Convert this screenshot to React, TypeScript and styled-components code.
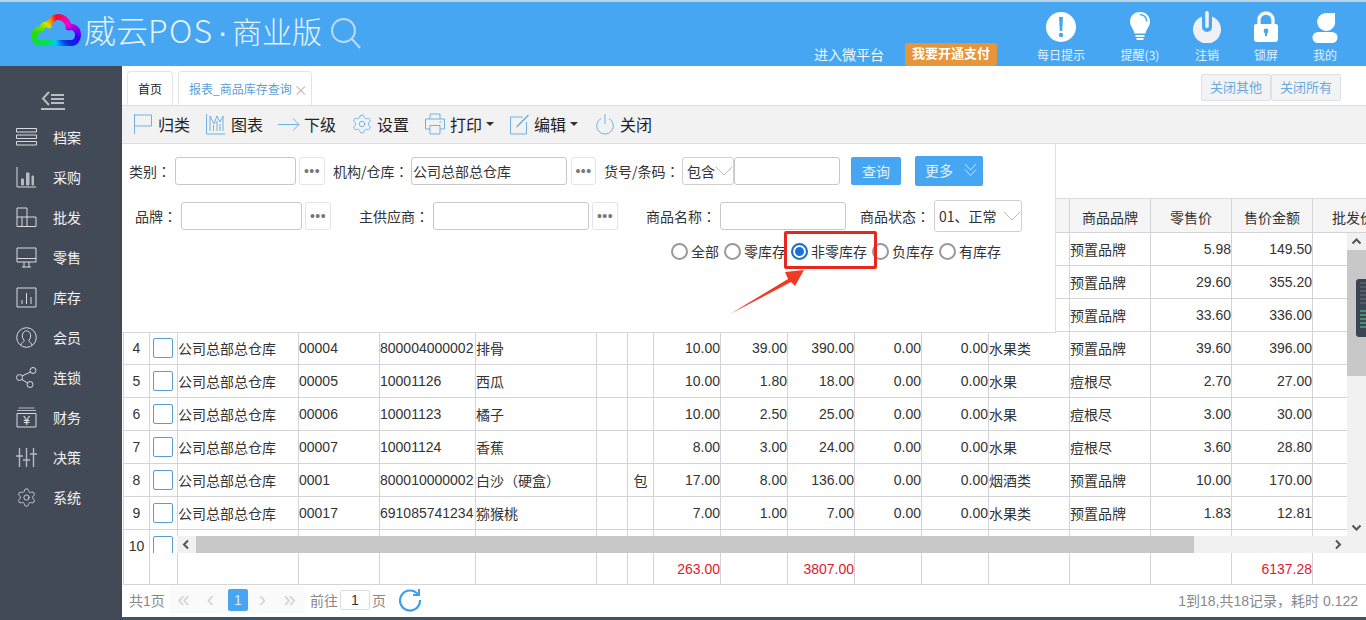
import React from "react";
import styled, { createGlobalStyle } from "styled-components";
import { Settings } from "lucide-react";

const Global = createGlobalStyle`
  html, body { margin: 0; padding: 0; background: #fff; }
  body { font-family: "Liberation Sans", "Noto Sans CJK SC", sans-serif; font-size: 14px; color: #333; }
  * { box-sizing: border-box; }
`;

const Page = styled.div`position: relative; width: 1366px; height: 620px; overflow: hidden; border-top: 2px solid #b9d3e6; background: #fff;`;
const Header = styled.header`display: flex; height: 64px; background: #46a6f2; padding-left: 31px;`;
const Logo = styled.svg`width: 50px; height: 34px; margin-top: 12px; flex: none;`;
const Conic = styled.div`width: 50px; height: 34px; background: conic-gradient(from 0deg at 25px 19px, #ff0030 0deg, #ff00d0 50deg, #3000ff 100deg, #0030e0 130deg, #00c8ff 180deg, #00e060 225deg, #20e000 270deg, #d8e000 315deg, #ff8000 340deg, #ff0030 360deg);`;
const Title = styled.div`margin: 3px 0 0 3px; font: 300 32px/48px "Noto Sans CJK SC", sans-serif; color: #e6f3fd; white-space: nowrap; height: 50px;`;
const TitleLatin = styled.span`letter-spacing: 1.3px;`;
const TitleDot = styled.span`font-family: "Liberation Sans", sans-serif; margin: 0 4px;`;
const TitleTail = styled.span`font-size: 30px;`;
const SearchIcon = styled.svg`width: 31px; height: 32px; margin: 15px 0 0 8px; flex: none;`;
const HeaderRight = styled.div`display: flex; align-items: flex-end; margin-left: auto; padding-right: 29px;`;
const PlatformLink = styled.span`font-size: 14px; line-height: 20px; color: #f2f8fe; margin-bottom: 2px; font-family: "Noto Sans CJK SC", sans-serif;`;
const PayButton = styled.span`margin: 0 42px 1px 21px; width: 92px; height: 22px; background: #e6953a; border-radius: 3px; color: #fff; font: 700 13px/20px "Noto Sans CJK SC", sans-serif; text-align: center; box-shadow: 0 1px 0 #b9a488;`;
const ToolSet = styled.div`display: flex; gap: 35px; height: 100%; margin-left: -2px;`;
const Tool = styled.div<{ $w: number }>`display: flex; flex-direction: column; align-items: center; width: ${p => p.$w}px; padding-top: 9px;`;
const ToolIcon = styled.svg`width: 32px; height: 32px; flex: none;`;
const ToolLabel = styled.span`font: 12px/16px "Noto Sans CJK SC", sans-serif; color: #e3f1fc; margin-top: 4px; white-space: nowrap;`;

const Body = styled.div`display: flex; height: 554px;`;
const Sidebar = styled.nav`width: 122px; flex: none; background: #434a57; padding-top: 24px;`;
const Toggle = styled.svg`display: block; width: 24px; height: 20px; margin: 0 0 7px 41px;`;
const NavItem = styled.div`display: flex; align-items: center; height: 40px; padding-left: 16px; color: #f2f3f5; font: 14px "Noto Sans CJK SC", sans-serif;`;
const NavIcon = styled.svg`width: 21px; height: 21px; margin-right: 16px; flex: none; fill: none; stroke: #d8dce2; stroke-width: 1;`;
const GearBox = styled.span`display: flex; width: 21px; margin-right: 16px; color: #d8dce2;`;

const Main = styled.main`flex: 1; min-width: 0; display: flex; flex-direction: column; border-bottom: 3px solid #3d5366;`;
const TabBar = styled.div`display: flex; align-items: flex-end; height: 39px; padding: 0 25px 0 5px; flex: none;`;
const Tab = styled.div<{ $active?: boolean; $w: number }>`
  display: flex; align-items: center; justify-content: ${p => (p.$active ? "flex-start" : "center")}; gap: 2px;
  width: ${p => p.$w}px; height: 34px; margin-right: 5px; padding-left: ${p => (p.$active ? 10 : 0)}px; border: 1px solid #e6e3e0; border-bottom: 0; border-radius: 4px 4px 0 0;
  font: 12px "Noto Sans CJK SC", sans-serif; color: ${p => (p.$active ? "#5b9fd6" : "#222")};
`;
const TabClose = styled.span`color: #bbb; font-size: 14px;`;
const TabActions = styled.div`display: flex; margin-left: auto; align-self: flex-start; margin-top: 8px;`;
const TabAction = styled.div`width: 70px; height: 27px; background: #f2f3f4; border: 1px solid #dfe0e2; border-radius: 2px; color: #6aa9dc; font: 13px/24px "Noto Sans CJK SC", sans-serif; text-align: center;`;

const Toolbar = styled.div`display: flex; align-items: center; gap: 16px; height: 39px; padding: 0 0 2px 12px; background: #f2f2f2; border-top: 1px solid #dedede; border-bottom: 1px solid #dedede; flex: none;`;
const ToolbarItem = styled.div<{ $gap: number; $ml?: number }>`display: flex; align-items: center; gap: ${p => p.$gap}px; margin-left: ${p => p.$ml ?? 0}px; font: 16px "Noto Sans CJK SC", sans-serif; color: #222;`;
const ToolbarIcon = styled.svg<{ $w: number }>`width: ${p => p.$w}px; height: 22px; flex: none; fill: none; stroke: #6fb1e2; stroke-width: 1;`;
const Caret = styled.i`width: 0; height: 0; margin-left: -1px; border: 4px solid transparent; border-top-color: #333; border-bottom: 0;`;

const Work = styled.div`position: relative; flex: 1; padding-top: 54px;`;
const Panel = styled.section`position: absolute; z-index: 2; top: 0; left: 0; width: 934px; height: 189px; padding-top: 13px; background: #fff; border-right: 1px solid #e0e0e0; border-bottom: 1px solid #d8d8d8;`;
const FilterRow = styled.div<{ $pad: number }>`display: flex; align-items: center; height: 28px; padding-left: ${p => p.$pad}px; & + & { margin-top: 17px; }`;
const Label = styled.label<{ $w: number; $ml?: number }>`flex: none; width: ${p => p.$w}px; margin-left: ${p => p.$ml ?? 0}px; font: 14px "Noto Sans CJK SC", sans-serif; color: #333; white-space: nowrap;`;
const Colon = styled.span`font-family: "Noto Sans CJK TC", sans-serif;`;
const TextInput = styled.input<{ $w: number }>`flex: none; width: ${p => p.$w}px; height: 28px; padding: 0 1px; border: 1px solid #c8c8c8; border-radius: 3px; outline: 0; background: #fff; font: 14px "Noto Sans CJK SC", sans-serif; color: #333;`;
const Dots = styled.button<{ $w: number; $ml: number }>`flex: none; width: ${p => p.$w}px; height: 28px; margin-left: ${p => p.$ml}px; padding: 0; border: 1px solid #e4e4e4; border-radius: 3px; background: #fff; color: #777; font: 14px/26px "Liberation Sans", sans-serif; letter-spacing: 0.4px;`;
const SelectBox = styled.div<{ $w: number; $h: number }>`flex: none; display: flex; align-items: center; justify-content: space-between; width: ${p => p.$w}px; height: ${p => p.$h}px; padding: 0 0 0 4px; border: 1px solid #d0d0d0; border-radius: 3px; font: 14px "Noto Sans CJK SC", sans-serif; color: #333; white-space: nowrap;`;
const Chevron = styled.svg`width: 18px; height: 10px; flex: none; fill: none; stroke: #bbb;`;
const QueryButton = styled.button`flex: none; width: 50px; height: 28px; margin-left: 11px; border: 0; border-radius: 2px; padding: 0; background: #46a6f2; color: #e4f2fd; font: 14px "Noto Sans CJK SC", sans-serif;`;
const MoreButton = styled.button`flex: none; display: flex; align-items: center; justify-content: space-between; width: 68px; height: 30px; margin-left: 14px; border: 0; border-radius: 2px; padding: 0 6px 2px 10px; background: #46a6f2; color: #e4f2fd; font: 14px "Noto Sans CJK SC", sans-serif;`;
const MoreChevrons = styled.svg`width: 13px; height: 14px; fill: none; stroke: #cfe6fa;`;
const RadioRow = styled.div`display: flex; gap: 5px; align-items: center; height: 17px; margin-top: 13px; padding-left: 549px;`;
const RadioItem = styled.label`display: flex; align-items: center; gap: 3px; font: 14px/17px "Noto Sans CJK SC", sans-serif; color: #333; white-space: nowrap;`;
const RadioDot = styled.span<{ $on?: boolean }>`
  flex: none; width: 17px; height: 17px; border-radius: 50%; background: #fff;
  border: 2px solid ${p => (p.$on ? "#1a6fd8" : "#9a9a9a")};
  box-shadow: ${p => (p.$on ? "inset 0 0 0 2px #fff, inset 0 0 0 7px #1a6fd8" : "none")};
`;
const Highlight = styled.div`position: absolute; left: 662px; top: 87px; width: 93px; height: 38px; border: 3px solid #e8261f; border-radius: 2px;`;
const ArrowMark = styled.svg`position: absolute; left: 600px; top: 120px; width: 90px; height: 60px; fill: #f03a24;`;

const ScrollArea = styled.div`position: relative; height: 355px; margin-left: 1px; border-left: 1px solid #d4d4d8; overflow: hidden;`;
const DataTable = styled.table`table-layout: fixed; width: 1270px; border-collapse: separate; border-spacing: 0; font-size: 14px;`;
const HeadCell = styled.th`height: 35px; padding: 2px 0 0; background: #f5f5f5; border-top: 1px solid #dcdcdc; border-bottom: 1px solid #d4d4d8; border-right: 1px solid #d4d4d8; font: 400 14px "Noto Sans CJK SC", sans-serif; color: #333; text-align: center; white-space: nowrap; overflow: hidden;`;
const Cell = styled.td<{ $align?: string; $red?: boolean }>`
  height: 33px; padding: 0; border-bottom: 1px solid #d4d4d8; border-right: 1px solid #d4d4d8;
  text-align: ${p => p.$align ?? "left"}; color: ${p => (p.$red ? "#e0182d" : "#333")}; white-space: nowrap; font-family: "Liberation Sans", "Noto Sans CJK SC", sans-serif;
`;
const CheckMark = styled.span`display: block; width: 20px; height: 20px; margin-left: 3px; border: 1px solid #5b9bd5; border-radius: 2px; background: #fff;`;
const SumWrap = styled.div`height: 32px; margin-left: 1px; border-left: 1px solid #d4d4d8; overflow: hidden;`;
const SumCell = styled(Cell)`height: 32px;`;

const VScroll = styled.div`position: absolute; top: 35px; right: 0; width: 19px; height: 320px; padding-bottom: 17px; background: #f1f1f1; display: flex; flex-direction: column; align-items: center;`;
const ScrollArrow = styled.svg`width: 19px; height: 17px; flex: none; fill: none; stroke: #555; stroke-width: 2;`;
const VThumb = styled.div`width: 19px; height: 126px; background: #c8c8c8; flex: none;`;
const VGap = styled.div`flex: 1;`;
const HScroll = styled.div`position: absolute; left: 53px; right: 19px; bottom: 0; height: 17px; background: #f1f1f1; display: flex; align-items: center;`;
const HThumb = styled.div`width: 998px; height: 17px; background: #c8c8c8; flex: none;`;

const Pager = styled.div`display: flex; align-items: center; height: 32px; flex: none; padding: 0 8px 2px 6px; color: #888; font: 14px "Noto Sans CJK SC", sans-serif; border-left: 1px solid transparent;`;
const PagerTotal = styled.span`font-family: "Liberation Sans", "Noto Sans CJK SC", sans-serif; font-size: 14px; width: 41px;`;
const PageStrip = styled.div`display: flex; align-items: center; width: 135px; height: 26px; background: #fafafa; color: #d4d4d4; font: 22px/24px "Liberation Sans", sans-serif;`;
const PageArrow = styled.span`width: 27px; text-align: center;`;
const PageCurrent = styled.span`width: 20px; height: 22px; margin: 0 1px 0 4px; background: #46a6f2; color: #d9eeff; border-radius: 2px; font: 14px/22px "Liberation Sans", sans-serif; text-align: center;`;
const PageGoto = styled.span`margin-left: 5px;`;
const PageInput = styled.input`width: 30px; height: 20px; margin: 0 2px; padding: 0; border: 1px solid #ddd; border-radius: 2px; text-align: center; font: 14px "Liberation Sans", sans-serif; color: #333; outline: 0;`;
const Refresh = styled.svg`width: 24px; height: 24px; margin-left: 12px; fill: none; stroke: #3d9fe8; stroke-width: 2.2;`;
const PagerInfo = styled.span`margin-left: auto; color: #888; font-family: "Liberation Sans", "Noto Sans CJK SC", sans-serif;`;

const Widget = styled.svg`position: absolute; z-index: 3; top: 277px; right: 0; width: 10px; height: 58px;`;

const widths = [26, 28, 121, 81, 96, 121, 31, 26, 67, 67, 67, 67, 67, 81, 81, 81, 81, 81];
const Cols = () => <colgroup>{widths.map((w, i) => <col key={i} style={{ width: w }} />)}</colgroup>;

const aligns: Record<number, string> = { 0: "center", 7: "center", 8: "right", 9: "right", 10: "right", 11: "right", 12: "right", 15: "right", 16: "right" };
const WH = "公司总部总仓库";
const rows: string[][] = [
  ["1", "", "", "", "", "", "", "", "", "", "", "", "", "", "预置品牌", "5.98", "149.50", ""],
  ["2", "", "", "", "", "", "", "", "", "", "", "", "", "", "预置品牌", "29.60", "355.20", ""],
  ["3", "", "", "", "", "", "", "", "", "", "", "", "", "", "预置品牌", "33.60", "336.00", ""],
  ["4", "", WH, "00004", "800004000002", "排骨", "", "", "10.00", "39.00", "390.00", "0.00", "0.00", "水果类", "预置品牌", "39.60", "396.00", ""],
  ["5", "", WH, "00005", "10001126", "西瓜", "", "", "10.00", "1.80", "18.00", "0.00", "0.00", "水果", "痘根尽", "2.70", "27.00", ""],
  ["6", "", WH, "00006", "10001123", "橘子", "", "", "10.00", "2.50", "25.00", "0.00", "0.00", "水果", "痘根尽", "3.00", "30.00", ""],
  ["7", "", WH, "00007", "10001124", "香蕉", "", "", "8.00", "3.00", "24.00", "0.00", "0.00", "水果", "痘根尽", "3.60", "28.80", ""],
  ["8", "", WH, "0001", "800010000002", "白沙（硬盒）", "", "包", "17.00", "8.00", "136.00", "0.00", "0.00", "烟酒类", "预置品牌", "10.00", "170.00", ""],
  ["9", "", WH, "00017", "691085741234", "猕猴桃", "", "", "7.00", "1.00", "7.00", "0.00", "0.00", "水果类", "预置品牌", "1.83", "12.81", ""],
  ["10", "", "", "", "", "", "", "", "", "", "", "", "", "", "", "", "", ""],
];
const sums: Record<number, string> = { 8: "263.00", 10: "3807.00", 16: "6137.28" };
const heads = ["", "", "", "", "", "", "", "", "", "", "", "", "", "", "商品品牌", "零售价", "售价金额", "批发价"];

const navIcons: React.ReactNode[] = [
  <path key="a" d="M.5 1.500h20V5H.5zM.5 8h20v3.500H.5zM.5 14.500h20V18H.5z" />,
  <g key="b"><path d="M1 0v20h19" /><path d="M5.500 12h2v6h-2zM10.500 6H13v12h-2.500zM16 9h1.500v9H16z" stroke="#b6bbc3" fill="#b6bbc3" /></g>,
  <path key="c" d="M1 1h10v9h9v9.500H1zM1 10h10v9.500M6 10v9.500" />,
  <path key="d" d="M1 1h19v14H1zM1 11.500h19M6 20h9M8 15v5M13 15v5" />,
  <path key="e" d="M1 1h19v19H1zM6 13v4M10.500 6v11M15 10v7" />,
  <g key="f"><circle cx="10.500" cy="10.500" r="9.800" /><path d="M5 18c.5-3 3-2.500 3.300-4.500C6.500 11.500 6 9.500 6.500 7.500 7 5 9 3.800 10.500 3.800S14 5 14.500 7.500c.5 2 0 4-1.800 6C13 15.500 15.500 15 16 18" /></g>,
  <g key="g"><circle cx="17" cy="3.500" r="3" /><circle cx="3.500" cy="10.500" r="3" /><circle cx="14" cy="17.500" r="3" /><path d="M14.500 5L6 9M6 12.500l5.500 3.500" /></g>,
  <g key="h"><path d="M2.500 1h16M1 3.500h19" stroke="#b6bbc3" /><path d="M1 6.500h19V20H1z" /><text x="10.500" y="17.500" fontSize="12" textAnchor="middle" fill="#e0e3e8" stroke="none" fontFamily="Liberation Sans">¥</text></g>,
  <path key="i" d="M3.500 1v19M10.500 1v19M17.500 1v19M0 9h7M7 13h7M14 7h7" strokeWidth="1.400" stroke="#b6bbc3" />,
];
const navLabels = ["档案", "采购", "批发", "零售", "库存", "会员", "连锁", "财务", "决策"];
const panelLabel = (t: string) => <>{t}<Colon>：</Colon></>;

export default function App() {
  return (
    <Page>
      <Global />
      <Header>
        <Logo viewBox="0 0 50 34">
          <defs>
            <mask id="cloud-mask">
              <path d="M10 29C5 29 3 25 3 22c0-4 3.500-7 7.500-6.500C11 11 15 9.500 18 11.500 19 6 23.500 3 27 3c6 0 10.500 5 10.500 10.500C42 11.500 47 15 47 21c0 4.500-3 8-7 8z" fill="none" stroke="#fff" strokeWidth="6" strokeLinejoin="round" />
            </mask>
          </defs>
          <foreignObject x="0" y="0" width="50" height="34" mask="url(#cloud-mask)"><Conic /></foreignObject>
        </Logo>
        <Title>威云<TitleLatin>POS</TitleLatin><TitleDot>·</TitleDot><TitleTail>商业版</TitleTail></Title>
        <SearchIcon viewBox="0 0 31 32" fill="none" stroke="#d5eafb" strokeWidth="2" opacity="0.8">
          <circle cx="13.500" cy="13.500" r="11.500" /><path d="M22 22l8 9" />
        </SearchIcon>
        <HeaderRight>
          <PlatformLink>进入微平台</PlatformLink>
          <PayButton>我要开通支付</PayButton>
          <ToolSet>
            <Tool $w={48}>
              <ToolIcon viewBox="0 0 32 32"><circle cx="16" cy="16" r="15" fill="#fff" /><path d="M14 6h4l-.8 14h-2.400z" fill="#46a6f2" /><circle cx="16" cy="24" r="2.200" fill="#46a6f2" /></ToolIcon>
              <ToolLabel>每日提示</ToolLabel>
            </Tool>
            <Tool $w={40}>
              <ToolIcon viewBox="0 0 32 32"><path d="M16 1C9.500 1 6 6 6 10.500c0 5 3.500 7 4.500 12h11c1-5 4.500-7 4.500-12C26 6 22.500 1 16 1z" fill="#fff" /><path d="M16 3.500c4 .3 6.500 3 6.800 7" stroke="#46a6f2" strokeWidth="1.500" fill="none" /><path d="M11.500 25h9M12.500 28h7" stroke="#fff" strokeWidth="2" /></ToolIcon>
              <ToolLabel>提醒(3)</ToolLabel>
            </Tool>
            <Tool $w={24}>
              <ToolIcon viewBox="0 0 32 32"><path d="M11 5.500a14 14 0 1 0 10 0V16a5 5 0 0 1-10 0z" fill="#f1f1f5" /><rect x="14.200" y="0" width="3.600" height="17" rx="1.800" fill="#f1f1f5" /></ToolIcon>
              <ToolLabel>注销</ToolLabel>
            </Tool>
            <Tool $w={24}>
              <ToolIcon viewBox="0 0 32 32"><path d="M9 14V9a7 7 0 0 1 14 0v5" fill="none" stroke="#f6f6f6" strokeWidth="3.400" /><path d="M4 15a2 2 0 0 1 2-2h20a2 2 0 0 1 2 2v13a3 3 0 0 1-3 3H7a3 3 0 0 1-3-3z" fill="#fff" /><circle cx="16" cy="20" r="2.400" fill="#46a6f2" /><path d="M15 21h2v4h-2z" fill="#46a6f2" /></ToolIcon>
              <ToolLabel>锁屏</ToolLabel>
            </Tool>
            <Tool $w={24}>
              <ToolIcon viewBox="0 0 32 32"><path d="M16 2h10v7a9 9 0 1 1-10-7z" fill="#fff" /><rect x="3.500" y="21" width="25" height="11" rx="5.500" fill="#fff" /></ToolIcon>
              <ToolLabel>我的</ToolLabel>
            </Tool>
          </ToolSet>
        </HeaderRight>
      </Header>
      <Body>
        <Sidebar>
          <Toggle viewBox="0 0 24 20" fill="none" stroke="#b8bcc4" strokeWidth="2">
            <path d="M8 2L2 8.500 8 15M10 5h13M10 9h13M10 13h13" /><path d="M0 19h24" />
          </Toggle>
          {navLabels.map((t, i) => (
            <NavItem key={t}><NavIcon viewBox="0 0 21 21">{navIcons[i]}</NavIcon>{t}</NavItem>
          ))}
          <NavItem><GearBox><Settings size={21} strokeWidth={1} /></GearBox>系统</NavItem>
        </Sidebar>
        <Main>
          <TabBar>
            <Tab $w={46}>首页</Tab>
            <Tab $w={134} $active>报表_商品库存查询<TabClose>×</TabClose></Tab>
            <TabActions>
              <TabAction>关闭其他</TabAction>
              <TabAction>关闭所有</TabAction>
            </TabActions>
          </TabBar>
          <Toolbar>
            <ToolbarItem $gap={6}>
              <ToolbarIcon $w={18} viewBox="0 0 18 22"><path d="M.5 1v20M.5 2h17v11H.5" /></ToolbarIcon>归类
            </ToolbarItem>
            <ToolbarItem $gap={5}>
              <ToolbarIcon $w={20} viewBox="0 0 20 22"><path d="M.5 1v20h19M4 18V3l4 8 3-8 3 6 3-6v15M7.500 18v-6M11 18V8M14 18v-7" /></ToolbarIcon>图表
            </ToolbarItem>
            <ToolbarItem $gap={4} $ml={-1}>
              <ToolbarIcon $w={22} viewBox="0 0 22 22"><path d="M0 11.500h21M15 5.500l6 6-6 6" /></ToolbarIcon>下级
            </ToolbarItem>
            <ToolbarItem $gap={4} $ml={-1}>
              <ToolbarIcon as={Settings} $w={22} size={22} strokeWidth={1} color="#6fb1e2" />设置
            </ToolbarItem>
            <ToolbarItem $gap={5}>
              <ToolbarIcon $w={20} viewBox="0 0 20 22"><path d="M5 6V1h10v5M5 16H.5V6h19v10H15M5 12.500h10V21H5zM14.500 9h2" /></ToolbarIcon>打印<Caret />
            </ToolbarItem>
            <ToolbarItem $gap={5}>
              <ToolbarIcon $w={19} viewBox="0 0 19 22"><path d="M13 4H.5v17h16V9M7 14l11-11" /><path d="M6 15.500l1-3 11-11 1 1-11 11z" fill="#6fb1e2" stroke="none" /></ToolbarIcon>编辑<Caret />
            </ToolbarItem>
            <ToolbarItem $gap={6} $ml={2}>
              <ToolbarIcon $w={18} viewBox="0 0 18 22"><path d="M5 5.500a8.300 8.300 0 1 0 8 0M9 1v10" /></ToolbarIcon>关闭
            </ToolbarItem>
          </Toolbar>
          <Work>
            <Panel>
              <FilterRow $pad={7}>
                <Label $w={46}>{panelLabel("类别")}</Label>
                <TextInput $w={121} />
                <Dots $w={26} $ml={3}>•••</Dots>
                <Label $w={78} $ml={8}>{panelLabel("机构/仓库")}</Label>
                <TextInput $w={156} defaultValue="公司总部总仓库" />
                <Dots $w={25} $ml={4}>•••</Dots>
                <Label $w={78} $ml={8}>{panelLabel("货号/条码")}</Label>
                <SelectBox $w={52} $h={28}>包含<Chevron viewBox="0 0 18 10"><path d="M1 1l8 8 8-8" /></Chevron></SelectBox>
                <TextInput $w={106} />
                <QueryButton>查询</QueryButton>
                <MoreButton>更多<MoreChevrons viewBox="0 0 13 14"><path d="M1 1l5.500 6L12 1M1 6.500l5.500 6 5.500-6" /></MoreChevrons></MoreButton>
              </FilterRow>
              <FilterRow $pad={13}>
                <Label $w={46}>{panelLabel("品牌")}</Label>
                <TextInput $w={121} />
                <Dots $w={26} $ml={3}>•••</Dots>
                <Label $w={74} $ml={28}>{panelLabel("主供应商")}</Label>
                <TextInput $w={156} />
                <Dots $w={26} $ml={3}>•••</Dots>
                <Label $w={74} $ml={28}>{panelLabel("商品名称")}</Label>
                <TextInput $w={126} />
                <Label $w={74} $ml={14}>{panelLabel("商品状态")}</Label>
                <SelectBox $w={88} $h={32}>01、正常<Chevron viewBox="0 0 18 10"><path d="M1 1l8 8 8-8" /></Chevron></SelectBox>
              </FilterRow>
              <RadioRow>
                <RadioItem><RadioDot />全部</RadioItem>
                <RadioItem><RadioDot />零库存</RadioItem>
                <RadioItem><RadioDot $on />非零库存</RadioItem>
                <RadioItem><RadioDot />负库存</RadioItem>
                <RadioItem><RadioDot />有库存</RadioItem>
              </RadioRow>
              <Highlight />
              <ArrowMark viewBox="0 0 90 60">
                <path d="M8 50L66 15l-3-7 19-2-9 16-4-4z" />
              </ArrowMark>
            </Panel>
            <ScrollArea>
              <DataTable>
                <Cols />
                <thead><tr>{heads.map((h, i) => <HeadCell key={i}>{h}</HeadCell>)}</tr></thead>
                <tbody>
                  {rows.map(r => (
                    <tr key={r[0]}>
                      {r.map((v, i) => (
                        <Cell key={i} $align={aligns[i]}>{i === 1 ? <CheckMark /> : v}</Cell>
                      ))}
                    </tr>
                  ))}
                </tbody>
              </DataTable>
              <VScroll>
                <ScrollArrow viewBox="0 0 19 17"><path d="M5.500 10.500l4-4 4 4" /></ScrollArrow>
                <VThumb />
                <VGap />
                <ScrollArrow viewBox="0 0 19 17"><path d="M5.500 6.500l4 4 4-4" /></ScrollArrow>
              </VScroll>
              <HScroll>
                <ScrollArrow viewBox="0 0 19 17"><path d="M11 4.500l-4 4 4 4" /></ScrollArrow>
                <HThumb />
                <VGap />
                <ScrollArrow viewBox="0 0 19 17"><path d="M8 4.500l4 4-4 4" /></ScrollArrow>
              </HScroll>
            </ScrollArea>
            <SumWrap>
              <DataTable>
                <Cols />
                <tbody><tr>{widths.map((_, i) => <SumCell key={i} $align="right" $red>{sums[i] ?? ""}</SumCell>)}</tr></tbody>
              </DataTable>
            </SumWrap>
          </Work>
          <Pager>
            <PagerTotal>共1页</PagerTotal>
            <PageStrip>
              <PageArrow>«</PageArrow>
              <PageArrow>‹</PageArrow>
              <PageCurrent>1</PageCurrent>
              <PageArrow>›</PageArrow>
              <PageArrow>»</PageArrow>
            </PageStrip>
            <PageGoto>前往</PageGoto>
            <PageInput defaultValue="1" />
            页
            <Refresh viewBox="0 0 24 24"><path d="M20 6.500A10 10 0 1 0 22 12" /><path d="M21 1v6h-6" strokeWidth="2" /></Refresh>
            <PagerInfo>1到18,共18记录，耗时 0.122</PagerInfo>
          </Pager>
        </Main>
      </Body>
      <Widget viewBox="0 0 10 58">
        <rect x="0" y="0" width="14" height="58" rx="3" fill="#3c4652" />
        <path d="M4 4h6M4 8h6M4 12h6M4 16h6M4 20h6M4 24h6" stroke="#6a7480" />
        <path d="M4 32h6M4 36h6M4 40h6M4 44h6M4 48h6" stroke="#5fd09a" />
      </Widget>
    </Page>
  );
}
